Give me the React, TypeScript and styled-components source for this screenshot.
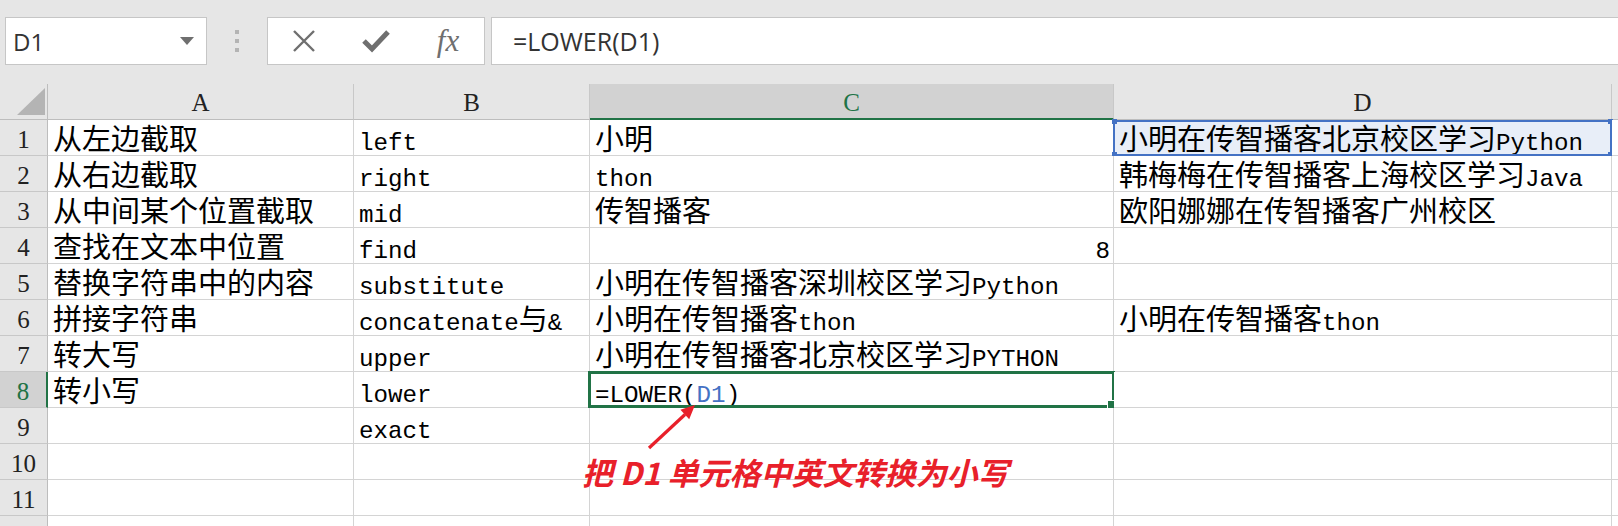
import React from "react";
import styled, { createGlobalStyle } from "styled-components";

const GlobalStyle = createGlobalStyle`
  html, body {
    margin: 0;
    padding: 0;
    background: #ffffff;
    overflow: hidden;
  }
  #root {
    width: 1618px;
    height: 526px;
    overflow: hidden;
  }
`;

const GREEN = "#217346";
const BLUE = "#4472c4";
const RED = "#e8202a";

const Page = styled.div`
  width: 1618px;
  height: 526px;
  overflow: hidden;
  background: #ffffff;
`;

/* ---------- formula bar ---------- */

const Toolbar = styled.div`
  height: 84px;
  box-sizing: border-box;
  padding: 17px 0 19px 5px;
  display: flex;
  align-items: stretch;
  background: #e6e6e6;
`;

const NameBox = styled.div`
  width: 202px;
  box-sizing: border-box;
  background: #ffffff;
  border: 1px solid #c6c6c6;
  display: flex;
  align-items: center;
  justify-content: space-between;
  padding: 0 12px 0 7px;
  font-family: "Open Sans", "Liberation Sans", sans-serif;
  font-size: 24px;
  color: #333333;
`;

const Caret = styled.span`
  width: 0;
  height: 0;
  border-left: 7px solid transparent;
  border-right: 7px solid transparent;
  border-top: 8px solid #6f6f6f;
`;

const Grip = styled.div`
  width: 60px;
  display: flex;
  flex-direction: column;
  align-items: center;
  justify-content: center;
  gap: 5px;
`;

const GripDot = styled.span`
  width: 4px;
  height: 4px;
  background: #b4b4b4;
`;

const FuncBox = styled.div`
  width: 218px;
  box-sizing: border-box;
  background: #ffffff;
  border: 1px solid #c6c6c6;
  display: grid;
  grid-template-columns: repeat(3, 1fr);
  align-items: center;
  justify-items: center;
`;

const Fx = styled.span`
  font-family: "Liberation Serif", serif;
  font-style: italic;
  font-size: 31px;
  color: #6f6f6f;
  line-height: 1;
  margin-top: -2px;
`;

const FormulaBox = styled.div`
  flex: 1;
  margin-left: 6px;
  background: #ffffff;
  border-top: 1px solid #c6c6c6;
  border-bottom: 1px solid #c6c6c6;
  border-left: 1px solid #c6c6c6;
  display: flex;
  align-items: center;
  padding-left: 21px;
  font-family: "Open Sans", "Liberation Sans", sans-serif;
  font-size: 25px;
  color: #333333;
`;

/* ---------- sheet ---------- */

const Sheet = styled.div`
  position: relative;
  display: grid;
  grid-template-columns: 48px 306px 236px 524px 498px 1fr;
  grid-auto-rows: 36px;
`;

const Corner = styled.div`
  box-sizing: border-box;
  background: #e6e6e6;
  border-right: 1px solid #bdbdbd;
  border-bottom: 1px solid #bdbdbd;
  display: flex;
  align-items: flex-end;
  justify-content: flex-end;
  padding: 0 2px 4px 0;
`;

const ColHead = styled.div<{ $active?: boolean }>`
  box-sizing: border-box;
  background: ${(p) => (p.$active ? "#d2d2d2" : "#e6e6e6")};
  border-right: 1px solid #c8c8c8;
  border-bottom: ${(p) => (p.$active ? `2px solid ${GREEN}` : "1px solid #bdbdbd")};
  text-align: center;
  padding-top: 3px;
  line-height: 32px;
  font-family: "Liberation Serif", serif;
  font-size: 25px;
  color: ${(p) => (p.$active ? GREEN : "#222222")};
`;

const RowHead = styled.div<{ $active?: boolean }>`
  box-sizing: border-box;
  background: ${(p) => (p.$active ? "#d2d2d2" : "#e6e6e6")};
  border-right: ${(p) => (p.$active ? `2px solid ${GREEN}` : "1px solid #bdbdbd")};
  border-bottom: 1px solid #c8c8c8;
  text-align: center;
  padding-top: 4px;
  line-height: 31px;
  font-family: "Liberation Serif", serif;
  font-size: 25px;
  color: ${(p) => (p.$active ? GREEN : "#222222")};
  overflow: hidden;
`;

const Cell = styled.div<{ $right?: boolean; $ref?: boolean }>`
  position: relative;
  box-sizing: border-box;
  background: ${(p) => (p.$ref ? "#e8eef8" : "#ffffff")};
  border-right: 1px solid #d4d4d4;
  border-bottom: 1px solid #d4d4d4;
  padding: 0 3px 0 5px;
  text-align: ${(p) => (p.$right ? "right" : "left")};
  white-space: nowrap;
  line-height: 35px;
  font-family: "Noto Sans CJK SC", sans-serif;
  font-size: 29px;
  color: #000000;
`;

const Latin = styled.span`
  font-family: "Liberation Mono", monospace;
  font-size: 24.2px;
`;

const RefText = styled.span`
  color: ${BLUE};
`;

const Selection = styled.div`
  position: absolute;
  top: -1px;
  left: -2px;
  right: -2px;
  bottom: -1px;
  border: 3px solid ${GREEN};
  pointer-events: none;
`;

const FillHandle = styled.div`
  position: absolute;
  right: -3px;
  bottom: -3px;
  width: 7px;
  height: 7px;
  background: ${GREEN};
  box-shadow: 0 0 0 1px #ffffff;
`;

const RefFrame = styled.div`
  position: absolute;
  top: 0;
  left: -1px;
  right: -1px;
  bottom: -1px;
  border: 2px solid ${BLUE};
  pointer-events: none;
`;

const RefKnob = styled.div<{ $v: "top" | "bottom"; $h: "left" | "right" }>`
  position: absolute;
  width: 5px;
  height: 5px;
  background: ${BLUE};
  ${(p) => p.$v}: -3px;
  ${(p) => p.$h}: -3px;
`;

const Note = styled.div`
  position: absolute;
  left: 582px;
  top: 372px;
  font-family: "Noto Sans CJK SC", sans-serif;
  font-weight: 700;
  font-style: italic;
  font-size: 31px;
  line-height: 31px;
  color: ${RED};
  white-space: nowrap;
`;

const ArrowLayer = styled.svg`
  position: absolute;
  left: 628px;
  top: 307px;
  overflow: visible;
`;

const split = (s: string) =>
  s
    .split(/([\x00-\x7f]+)/)
    .filter(Boolean)
    .map((part, i) =>
      /^[\x00-\x7f]+$/.test(part) ? <Latin key={i}>{part}</Latin> : <span key={i}>{part}</span>
    );

const rows: string[][] = [
  ["从左边截取", "left", "小明", "小明在传智播客北京校区学习Python"],
  ["从右边截取", "right", "thon", "韩梅梅在传智播客上海校区学习Java"],
  ["从中间某个位置截取", "mid", "传智播客", "欧阳娜娜在传智播客广州校区"],
  ["查找在文本中位置", "find", "8", ""],
  ["替换字符串中的内容", "substitute", "小明在传智播客深圳校区学习Python", ""],
  ["拼接字符串", "concatenate与&", "小明在传智播客thon", "小明在传智播客thon"],
  ["转大写", "upper", "小明在传智播客北京校区学习PYTHON", ""],
  ["转小写", "lower", "=LOWER(D1)", ""],
  ["", "exact", "", ""],
  ["", "", "", ""],
  ["", "", "", ""],
  ["", "", "", ""],
];

const CrossIcon = () => (
  <svg width="24" height="24" viewBox="0 0 24 24">
    <path d="M2 2 L22 22 M22 2 L2 22" stroke="#6f6f6f" strokeWidth="2.4" fill="none" />
  </svg>
);

const CheckIcon = () => (
  <svg width="28" height="24" viewBox="0 0 28 24">
    <path d="M2 12 L10 20 L26 3" stroke="#6f6f6f" strokeWidth="5" fill="none" strokeLinejoin="miter" />
  </svg>
);

const CornerMark = () => (
  <svg width="28" height="27" viewBox="0 0 28 27">
    <polygon points="28,0 28,27 0,27" fill="#b4b4b4" />
  </svg>
);

const renderCell = (r: number, c: number, text: string) => {
  if (r === 7 && c === 2) {
    return (
      <Latin>
        =LOWER(<RefText>D1</RefText>)
      </Latin>
    );
  }
  return split(text);
};

export default function App() {
  return (
    <Page>
      <GlobalStyle />
      <Toolbar>
        <NameBox>
          <span>D1</span>
          <Caret />
        </NameBox>
        <Grip>
          <GripDot />
          <GripDot />
          <GripDot />
        </Grip>
        <FuncBox>
          <CrossIcon />
          <CheckIcon />
          <Fx>fx</Fx>
        </FuncBox>
        <FormulaBox>=LOWER(D1)</FormulaBox>
      </Toolbar>
      <Sheet>
        <Corner>
          <CornerMark />
        </Corner>
        {["A", "B", "C", "D", ""].map((h) => (
          <ColHead key={h || "E"} $active={h === "C"}>
            {h}
          </ColHead>
        ))}
        {rows.map((row, r) => (
          <React.Fragment key={r}>
            <RowHead $active={r === 7}>{r < 11 ? r + 1 : ""}</RowHead>
            {row.map((text, c) => (
              <Cell key={c} $right={r === 3 && c === 2} $ref={r === 0 && c === 3}>
                {renderCell(r, c, text)}
                {r === 7 && c === 2 && (
                  <Selection>
                    <FillHandle />
                  </Selection>
                )}
                {r === 0 && c === 3 && (
                  <RefFrame>
                    <RefKnob $v="top" $h="left" />
                    <RefKnob $v="top" $h="right" />
                    <RefKnob $v="bottom" $h="left" />
                    <RefKnob $v="bottom" $h="right" />
                  </RefFrame>
                )}
              </Cell>
            ))}
            <Cell />
          </React.Fragment>
        ))}
        <ArrowLayer width="90" height="80" viewBox="0 0 90 80">
          <line x1="21" y1="57" x2="57" y2="23.5" stroke={RED} strokeWidth="3.2" />
          <polygon points="67,14 61.2,28.2 52.4,18.8" fill={RED} />
        </ArrowLayer>
        <Note>
          把 D1 单元格中英文转换为小写
        </Note>
      </Sheet>
    </Page>
  );
}
